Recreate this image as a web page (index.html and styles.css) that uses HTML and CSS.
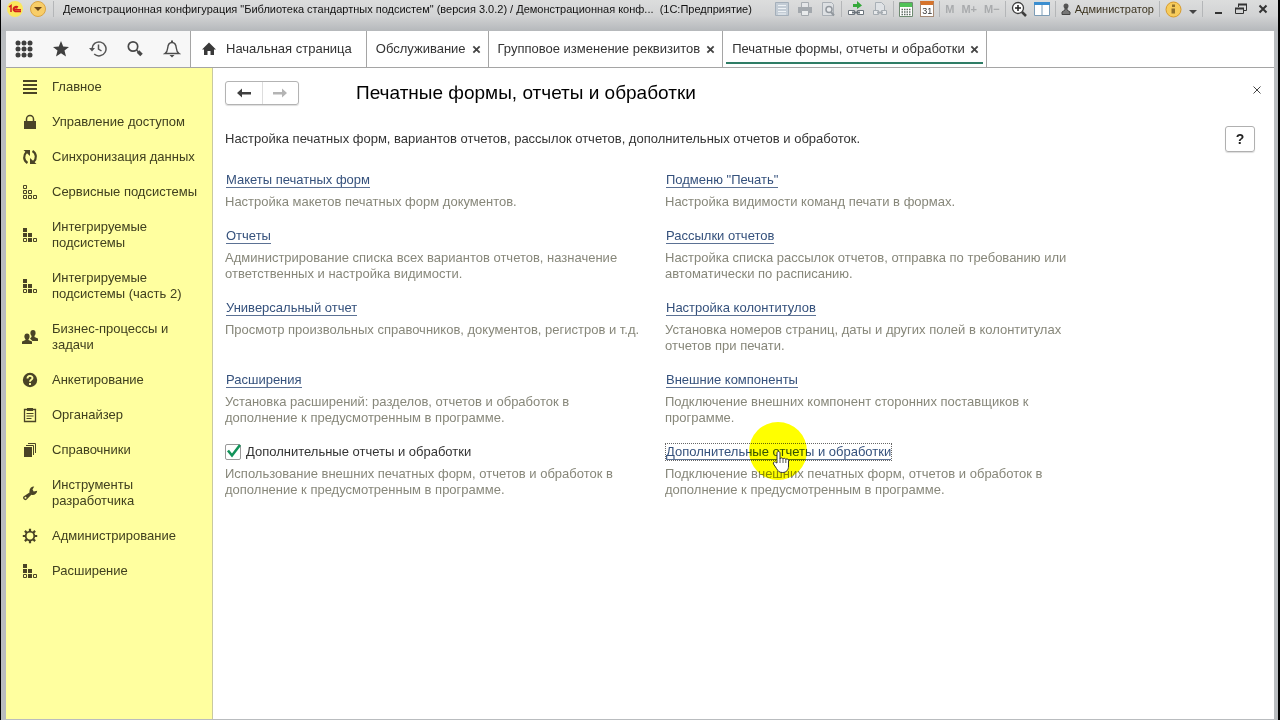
FILE: index.html
```html
<!DOCTYPE html>
<html lang="ru">
<head>
<meta charset="utf-8">
<title>Печатные формы, отчеты и обработки</title>
<link rel="stylesheet" href="styles.css">
</head>
<body>

<svg class="sprite" aria-hidden="true">
  <symbol id="i-blocks" viewBox="0 0 16 16">
    <path d="M1 1h4v4H1zM1 6h4v4H1zM6 6h4v4H6zM6 11h4v4H6z" fill="currentColor"/>
    <path d="M1.5 11.500h3v3h-3zM11.500 11.500h3v3h-3z" fill="none" stroke="currentColor"/>
  </symbol>
  <symbol id="i-close" viewBox="0 0 10 10">
    <path d="M1.500 1.500l7 7M8.500 1.500l-7 7" fill="none" stroke="currentColor" stroke-width="2"/>
  </symbol>
</svg>

<div class="window">

  <header class="titlebar">
    <button class="tb logo" aria-label="1С"><svg width="18" height="18" viewBox="0 0 18 18"><circle cx="9" cy="9" r="8" fill="#fbe75c"/><path d="M3 7l2-1.500v6.500M12 7a3 2.500 0 1 0-1 4.500h4M11 8.500a1.500 1 0 1 0-1 1.200h5" fill="none" stroke="#d2201c" stroke-width="1.500"/></svg></button>
    <button class="tb drop" aria-label="Меню"><svg width="18" height="18" viewBox="0 0 18 18"><circle cx="9" cy="9" r="7.500" fill="#f8cd68" stroke="#d9a443"/><path d="M5 7h8l-4 4z" fill="#6b4518"/></svg></button>
    <i class="sep"></i>
    <span class="caption">Демонстрационная конфигурация "Библиотека стандартных подсистем" (версия 3.0.2) / Демонстрационная конф...&nbsp; (1С:Предприятие)</span>
    <div class="tools">
      <button class="tb" aria-label="Сохранить"><svg width="16" height="16" viewBox="0 0 16 16"><path d="M1.500 1.500h13v13h-13z" fill="#c3ccd5" stroke="#a4afba"/><path d="M4 4.500h8M4 7.500h8M4 10.500h8M4 13h8" stroke="#eef2f5"/></svg></button>
      <button class="tb" aria-label="Печать"><svg width="16" height="16" viewBox="0 0 16 16"><path d="M4.500 6V1.500h7V6" fill="#e4e6e8" stroke="#a7acb1"/><path d="M1 6h14v6H1z" fill="#a3a8ad"/><path d="M4.500 9.500h7v5h-7z" fill="#e9ebec" stroke="#a3a8ad"/></svg></button>
      <button class="tb" aria-label="Просмотр"><svg width="16" height="16" viewBox="0 0 16 16"><path d="M2.500 1.500h9l2 2v11h-11z" fill="#dde0e3" stroke="#a9afb5"/><circle cx="9" cy="8.500" r="3" fill="#e8eaec" stroke="#92989e" stroke-width="1.500"/><path d="M11 11l3 3.500" stroke="#92989e" stroke-width="2"/></svg></button>
      <i class="sep"></i>
      <button class="tb" aria-label="Получить ссылку"><svg width="18" height="16" viewBox="0 0 18 16"><path d="M6 3h4V0l5 4.500L10 8V6H6z" fill="#35a83a"/><path d="M7.500 9.500h-6v4h6zM16.500 9.500h-6v4h6z" fill="#fff" stroke="#6a737b"/><path d="M5 11.500h8" stroke="#6a737b" stroke-width="2"/></svg></button>
      <button class="tb" aria-label="Перейти по ссылке"><svg width="16" height="16" viewBox="0 0 16 16"><path d="M3.500 1.500h6l3 3v7h-9z" fill="#dfe2e5" stroke="#a9b0b6"/><path d="M1.500 9.500h5v4h-5zM9.500 9.500h5v4h-5z" fill="#e7e9eb" stroke="#a4abb1"/><path d="M5 11.500h6" stroke="#a4abb1" stroke-width="2"/></svg></button>
      <i class="sep"></i>
      <button class="tb" aria-label="Калькулятор"><svg width="14" height="16" viewBox="0 0 14 16"><path d="M.5 1.500h13v14H.5z" fill="#fff" stroke="#6d8a70"/><path d="M1 2h12v4H1z" fill="#4fc257"/><path d="M2.500 8.500h9M2.500 11h9M2.500 13.500h9" stroke="#5d6a62" stroke-width="1.500" stroke-dasharray="1.500 1"/></svg></button>
      <button class="tb calendar" aria-label="Календарь"><span>31</span></button>
      <i class="sep"></i>
      <button class="tb mem">M</button>
      <button class="tb mem">M+</button>
      <button class="tb mem">M−</button>
      <i class="sep"></i>
      <button class="tb" aria-label="Масштаб"><svg width="16" height="16" viewBox="0 0 16 16"><circle cx="7" cy="7" r="5.500" fill="#fff" stroke="#3d3d3d" stroke-width="1.300"/><path d="M4 7h6M7 4v6" stroke="#222" stroke-width="1.500"/><path d="M11 11l4 4" stroke="#3d3d3d" stroke-width="2.500"/></svg></button>
      <button class="tb" aria-label="Панели"><svg width="16" height="16" viewBox="0 0 16 16"><path d="M.5 1.500h15v13H.5zM8 4v10" fill="#fff" stroke="#7c9cb6"/><path d="M0 1h16v3H0z" fill="#3a8ed0"/></svg></button>
      <i class="sep"></i>
      <button class="tb user"><svg width="10" height="12" viewBox="0 0 10 12"><circle cx="5" cy="3" r="2.500" fill="#555"/><path d="M1 11.500V9l3-2V5h2v2l3 2v2.500z" fill="#777" stroke="#444"/></svg>Администратор</button>
      <i class="sep"></i>
      <button class="tb" aria-label="Информация"><svg width="17" height="17" viewBox="0 0 17 17"><circle cx="8.500" cy="8.500" r="7.500" fill="#f7cc5c" stroke="#d79a2b"/><path d="M7 3.500h3v2.500H7zM6.500 7.500H10v5H6.500z" fill="#8f702d"/></svg></button>
      <button class="tb arrow" aria-label="Ещё"><svg width="8" height="4" viewBox="0 0 8 4"><path d="M0 0h8L4 4z" fill="#444"/></svg></button>
      <i class="sep"></i>
      <button class="tb win" aria-label="Свернуть"><svg width="12" height="12" viewBox="0 0 12 12"><path d="M3 10h7" stroke="#333" stroke-width="2"/></svg></button>
      <button class="tb win" aria-label="Восстановить"><svg width="12" height="12" viewBox="0 0 12 12"><path d="M3.500 4V1.500h8v6H9" fill="none" stroke="#333"/><path d="M3 1.500h9M0 5.500h9" stroke="#333" stroke-width="2"/><path d="M.5 5.500h8v5h-8z" fill="none" stroke="#333"/></svg></button>
      <button class="tb win" aria-label="Закрыть"><svg width="10" height="10"><use href="#i-close"/></svg></button>
    </div>
  </header>

  <nav class="tabbar">
    <div class="quick">
      <button aria-label="Разделы"><svg width="18" height="18" viewBox="0 0 18 18" fill="#3f3f3f"><circle cx="3" cy="3" r="2.500"/><circle cx="9" cy="3" r="2.500"/><circle cx="15" cy="3" r="2.500"/><circle cx="3" cy="9" r="2.500"/><circle cx="9" cy="9" r="2.500"/><circle cx="15" cy="9" r="2.500"/><circle cx="3" cy="15" r="2.500"/><circle cx="9" cy="15" r="2.500"/><circle cx="15" cy="15" r="2.500"/></svg></button>
      <button aria-label="Избранное"><svg width="18" height="18" viewBox="0 0 18 18"><path d="M9 1l2.200 5.500 5.800.4-4.500 3.700L14 16.500 9 13.300 4 16.500l1.500-5.900L1 6.900l5.800-.4z" fill="#3f3f3f"/></svg></button>
      <button aria-label="История"><svg width="18" height="18" viewBox="0 0 18 18" fill="none" stroke="#555" stroke-width="1.500"><path d="M3 9a7 7 0 1 1 2.200 5"/><path d="M9.500 4.500V9l3 2"/><path d="M0 8h6l-3 3.500z" fill="#555" stroke="none"/></svg></button>
      <button aria-label="Поиск"><svg width="18" height="18" viewBox="0 0 18 18" fill="none" stroke="#484848"><circle cx="7" cy="6.500" r="4.700" stroke-width="1.700"/><path d="M10.500 10l2 2" stroke-width="1.500"/><path d="M12 11.500l3.500 3.500" stroke-width="3.500"/></svg></button>
      <button aria-label="Оповещения"><svg width="18" height="18" viewBox="0 0 18 18"><path d="M2 13.500c2-1.500 2.500-3 2.700-5.500C5 4.500 6.500 2.500 9 2.500s4 2 4.300 5.500c.2 2.500.7 4 2.700 5.500z" fill="none" stroke="#4c4c4c" stroke-width="1.400"/><path d="M8 .5h2v2H8zM6.500 15h5L9 17.500z" fill="#4c4c4c"/></svg></button>
    </div>
    <div class="tab start"><svg width="14" height="14" viewBox="0 0 14 14"><path d="M7 .5L0 7.500h2V13h3.500V9h3v4H12V7.500h2z" fill="#3a3a3a"/></svg><a href="#">Начальная страница</a></div>
    <div class="tab"><a href="#">Обслуживание</a><button class="x" aria-label="Закрыть"><svg width="9" height="9"><use href="#i-close"/></svg></button></div>
    <div class="tab"><a href="#">Групповое изменение реквизитов</a><button class="x" aria-label="Закрыть"><svg width="9" height="9"><use href="#i-close"/></svg></button></div>
    <div class="tab active"><a href="#">Печатные формы, отчеты и обработки</a><button class="x" aria-label="Закрыть"><svg width="9" height="9"><use href="#i-close"/></svg></button></div>
  </nav>

  <div class="body">
    <nav class="sections">
      <a href="#"><svg viewBox="0 0 16 16"><path d="M1 2h14M1 6h14M1 10h14M1 14h14" stroke="currentColor" stroke-width="2"/></svg><span>Главное</span></a>
      <a href="#"><svg viewBox="0 0 16 16"><path d="M2 7h12v8H2z" fill="currentColor"/><path d="M4.500 7.500V5a3.500 3.500 0 0 1 7 0v2.500" fill="none" stroke="currentColor" stroke-width="1.500"/></svg><span>Управление доступом</span></a>
      <a href="#"><svg viewBox="0 0 16 16"><path d="M5.500 14C1.500 11.500 1 6.500 4.500 3M10.500 2c4 2.500 4.500 7.500 1 11" fill="none" stroke="currentColor" stroke-width="2.200"/><path d="M1.500 1H8v6zM14.500 15H8V9z" fill="currentColor"/></svg><span>Синхронизация данных</span></a>
      <a href="#"><svg viewBox="0 0 16 16"><path d="M1.500 1.500h3v3h-3zM1.500 6.500h3v3h-3zM6.500 6.500h3v3h-3zM1.500 11.500h3v3h-3zM6.500 11.500h3v3h-3zM11.500 11.500h3v3h-3z" fill="none" stroke="currentColor"/></svg><span>Сервисные подсистемы</span></a>
      <a href="#"><svg><use href="#i-blocks"/></svg><span>Интегрируемые подсистемы</span></a>
      <a href="#"><svg><use href="#i-blocks"/></svg><span>Интегрируемые подсистемы (часть 2)</span></a>
      <a href="#"><svg viewBox="0 0 16 16" fill="currentColor"><ellipse cx="11" cy="4" rx="2.600" ry="3"/><path d="M9.500 6h3v2l3.500 1.500V12h-5.500L8 9.500 9.500 8z"/><ellipse cx="5" cy="7.500" rx="2.600" ry="3"/><path d="M0 15v-2.500L3.500 11V9h3v2l3.500 1.500V15z"/></svg><span>Бизнес-процессы и задачи</span></a>
      <a href="#"><svg viewBox="0 0 16 16"><circle cx="8" cy="8" r="7.200" fill="currentColor"/><path d="M5.500 6.500c0-3.500 5-3.200 5-.5C10.500 7.800 8 7.700 8 9.700M8 11v2" fill="none" stroke="#ffff9f" stroke-width="1.900"/></svg><span>Анкетирование</span></a>
      <a href="#"><svg viewBox="0 0 16 16"><path d="M2.500 2.500h11v12h-11z" fill="none" stroke="currentColor" stroke-width="1.300"/><path d="M5 1h6v3H5z" fill="currentColor"/><path d="M4.500 6.500h7M4.500 9h7M4.500 11.500h5" stroke="currentColor"/></svg><span>Органайзер</span></a>
      <a href="#"><svg viewBox="0 0 16 16"><path d="M2 5h8v10H2z" fill="currentColor"/><path d="M4 3.500h7.500V13M6 1.500h7.500V11" fill="none" stroke="currentColor"/></svg><span>Справочники</span></a>
      <a href="#"><svg viewBox="0 0 16 16"><path d="M1.500 11.500l6-4C7 4 9 1.500 12.200 1.500L10.500 4.500l1.200 2 3.500-.8C15 9 12 10.500 9.300 9.700l-4.800 5c-2 1.500-4.500-1.200-3-3.200z" fill="currentColor"/><circle cx="3.500" cy="12.700" r="1" fill="#ffff9f"/></svg><span>Инструменты разработчика</span></a>
      <a href="#"><svg viewBox="0 0 16 16" fill="none" stroke="currentColor"><circle cx="8" cy="8" r="4.300" stroke-width="1.800"/><path d="M8 .8v3M8 12.200v3M.8 8h3M12.200 8h3M2.900 2.900L5 5M11 11l2.100 2.100M2.900 13.100L5 11M11 5l2.100-2.100" stroke-width="2.200"/></svg><span>Администрирование</span></a>
      <a href="#"><svg><use href="#i-blocks"/></svg><span>Расширение</span></a>
    </nav>

    <main class="page">
      <div class="head">
        <div class="history">
          <button aria-label="Назад"><svg width="14" height="10" viewBox="0 0 14 10"><path d="M0 5l5-4.500V4h9v2.500H5v3z" fill="#3f3f3f"/></svg></button>
          <button aria-label="Вперед" disabled><svg width="14" height="10" viewBox="0 0 14 10"><path d="M14 5L9 .5V4H0v2.500h9v3z" fill="#b4b4b4"/></svg></button>
        </div>
        <h1>Печатные формы, отчеты и обработки</h1>
        <button class="close" aria-label="Закрыть"><svg width="8" height="8" viewBox="0 0 8 8"><path d="M.5.5l7 7M7.500.5l-7 7" stroke="#444"/></svg></button>
      </div>

      <div class="intro">
        <p>Настройка печатных форм, вариантов отчетов, рассылок отчетов, дополнительных отчетов и обработок.</p>
        <button class="help">?</button>
      </div>

      <div class="options">
        <section><a href="#">Макеты печатных форм</a><p>Настройка макетов печатных форм документов.</p></section>
        <section><a href="#">Подменю "Печать"</a><p>Настройка видимости команд печати в формах.</p></section>
        <section><a href="#">Отчеты</a><p>Администрирование списка всех вариантов отчетов, назначение ответственных и настройка видимости.</p></section>
        <section><a href="#">Рассылки отчетов</a><p>Настройка списка рассылок отчетов, отправка по требованию или автоматически по расписанию.</p></section>
        <section><a href="#">Универсальный отчет</a><p>Просмотр произвольных справочников, документов, регистров и т.д.</p></section>
        <section><a href="#">Настройка колонтитулов</a><p>Установка номеров страниц, даты и других полей в колонтитулах отчетов при печати.</p></section>
        <section><a href="#">Расширения</a><p>Установка расширений: разделов, отчетов и обработок в дополнение к предусмотренным в программе.</p></section>
        <section><a href="#">Внешние компоненты</a><p>Подключение внешних компонент сторонних поставщиков к программе.</p></section>
        <section>
          <label class="check"><span class="box"><input type="checkbox" checked><svg width="16" height="16" viewBox="0 0 16 16"><path d="M3 6.500l4 5L15 1" fill="none" stroke="#12935a" stroke-width="2.600"/></svg></span>Дополнительные отчеты и обработки</label>
          <p>Использование внешних печатных форм, отчетов и обработок в дополнение к предусмотренным в программе.</p>
        </section>
        <section class="current">
          <a href="#">Дополнительные отчеты и обработки</a>
          <p>Подключение внешних печатных форм, отчетов и обработок в дополнение к предусмотренным в программе.</p>
          <span class="spot"></span>
          <svg class="hand" width="18" height="24" viewBox="0 0 18 24"><path d="M5 13V3c0-2 3-2 3 0v6c0-1.500 3-1.500 3 .3 0-1.500 2.800-1.300 2.800.4 0-1.300 2.700-1 2.700.8V16c0 4-2 6.500-6 6.500-3.500 0-4.500-1.500-6-4L1.500 14c-1-2 1.500-2.800 2.300-1.500z" fill="#fff" stroke="#333"/><path d="M8 9v4M11 9.500V13M13.800 10v3" stroke="#555"/></svg>
        </section>
      </div>
    </main>
  </div>
</div>

</body>
</html>
```
FILE: styles.css
```css
* {
  box-sizing: border-box;
}
html, body {
  height: 100%;
}
body {
  margin: 0;
  background: #000;
  font: 13px/16px "Liberation Sans", Arial, sans-serif;
  color: #333;
  overflow: hidden;
}
button {
  padding: 0;
  border: 0;
  background: none;
  font: inherit;
  color: inherit;
}
svg {
  display: block;
  flex: none;
}
h1, p {
  margin: 0;
}
.sprite {
  position: absolute;
  width: 0;
  height: 0;
}

.window {
  display: flex;
  flex-direction: column;
  min-height: 100vh;
  margin: 0 2px 0 1px;
  padding: 0 4px 1px 5px;
  background: #b9bcbf;
}

/* title bar */
.titlebar {
  display: flex;
  align-items: center;
  height: 31px;
  margin: 0 -4px 0 -5px;
  padding: 0 10px 13px 5px;
  background: linear-gradient(#dcdddd, #d2d3d4 50%, #b5b8bb);
  font-size: 11px;
  color: #111;
}
.tb {
  display: flex;
  align-items: center;
}
.drop {
  margin-left: 5px;
}
.sep {
  width: 1px;
  height: 16px;
  margin: 0 -2px;
  background: #b4b6b8;
}
.titlebar > .sep {
  margin: 0 9px 0 6px;
}
.caption {
  flex: 1;
  white-space: nowrap;
}
.tools {
  display: flex;
  align-items: center;
  gap: 7px;
}
.calendar {
  width: 14px;
  height: 16px;
  justify-content: center;
  border: 1px solid #a58a76;
  border-top: 4px solid #d5732c;
  background: #fff;
  font-size: 9px;
  line-height: 10px;
  color: #333;
}
.mem {
  font-weight: bold;
  color: #a9abad;
}
.user {
  gap: 4px;
  color: #3c3420;
}
.arrow {
  padding-top: 6px;
}
.win {
  margin-left: 4px;
  color: #333;
}

/* open tabs */
.tabbar {
  display: flex;
  height: 37px;
  background: #fff;
  border-bottom: 1px solid #a5a5a5;
}
.quick {
  display: flex;
  align-items: center;
  gap: 19px;
  padding: 0 9px;
  background: #f7f7f7;
}
.tab {
  display: flex;
  align-items: center;
  gap: 6px;
  padding: 0 7px 0 9px;
  border-left: 1px solid #a5a5a5;
}
.tab a {
  color: #333;
  text-decoration: none;
}
.tab .x {
  color: #444;
}
.tab.start {
  gap: 10px;
  padding: 0 14px 0 11px;
}
.tab.active {
  gap: 5px;
  border-right: 1px solid #a5a5a5;
  background: linear-gradient(#2f7d66, #2f7d66) center bottom 3px / calc(100% - 6px) 2px no-repeat;
}

.body {
  display: flex;
  flex: 1;
}

/* sections panel */
.sections {
  display: flex;
  flex-direction: column;
  flex: none;
  gap: 19px;
  width: 207px;
  padding: 11px 12px 11px 16px;
  border-right: 1px solid #c9c9a0;
  background: #ffff9f;
}
.sections a {
  display: flex;
  align-items: center;
  gap: 14px;
  color: #40401f;
  text-decoration: none;
}
.sections svg {
  width: 16px;
  height: 16px;
  color: #4a4426;
}

/* page */
.page {
  flex: 1;
  padding: 12px 19px 12px 12px;
  background: #fff;
}
.head {
  display: flex;
  align-items: center;
  height: 26px;
}
.history {
  display: flex;
  width: 74px;
  height: 24px;
  border: 1px solid #b3b3b3;
  border-radius: 3px;
  box-shadow: 0 1px 1px #ddd;
}
.history button {
  display: flex;
  flex: 1;
  align-items: center;
  justify-content: center;
}
.history button + button {
  border-left: 1px solid #ddd;
}
.head h1 {
  flex: 1;
  margin-left: 57px;
  font-size: 19px;
  font-weight: normal;
  line-height: 24px;
  color: #000;
}
.close {
  margin-right: -14px;
  padding: 0 8px 6px;
}
.intro {
  display: flex;
  align-items: center;
  justify-content: space-between;
  margin: 20px 0;
}
.help {
  width: 30px;
  height: 26px;
  border: 1px solid #b0b0b0;
  border-radius: 3px;
  box-shadow: 0 1px 1px #ddd;
  font-size: 14px;
  font-weight: bold;
  color: #222;
}
.options {
  display: grid;
  grid-template-columns: minmax(0, 418px) minmax(0, 418px);
  gap: 18px 22px;
}
.options section {
  position: relative;
}
.options a {
  display: inline-block;
  height: 16px;
  margin-left: 1px;
  border-bottom: 1px solid #5b7194;
  color: #35517c;
  line-height: 15px;
  text-decoration: none;
  vertical-align: top;
}
.options p {
  margin-top: 6px;
  color: #87877a;
}
.check {
  display: flex;
  align-items: center;
  gap: 5px;
  height: 16px;
}
.box {
  display: grid;
}
.box > * {
  grid-area: 1 / 1;
}
.box input {
  width: 16px;
  height: 16px;
  margin: 0;
  border: 1px solid #999;
  border-radius: 2px;
  background: #fff;
  appearance: none;
}
.box svg {
  pointer-events: none;
}
.options .current a {
  outline: 1px dotted #666;
}

/* pointer highlight */
.spot {
  position: absolute;
  left: 84px;
  top: -22px;
  width: 58px;
  height: 58px;
  border-radius: 50%;
  background: #ff0;
  mix-blend-mode: multiply;
}
.hand {
  position: absolute;
  left: 107px;
  top: 6px;
}
```
